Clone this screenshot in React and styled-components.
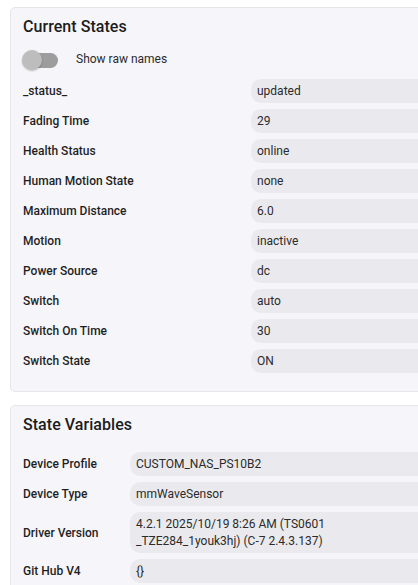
import React from "react";
import styled, { createGlobalStyle } from "styled-components";

const Global = createGlobalStyle`
  html, body { margin: 0; padding: 0; background: #ffffff; overflow: hidden; }
  body { font-family: Roboto, "Noto Sans", "Liberation Sans", sans-serif; color: #1f1f1f; }
`;

const Page = styled.div`
  display: flex;
  flex-direction: column;
  gap: 13px;
  padding: 7px 0 0 10px;
  width: 460px;
`;

const Card = styled.section`
  background: #f6f6fa;
  border: 1px solid #e6e6ea;
  border-radius: 5px;
  padding: 9px 12px ${(p) => p.$padBottom}px 12px;
`;

const Title = styled.h2`
  margin: 0;
  font-size: 16px;
  line-height: 20px;
  font-weight: 500;
  color: #1c1c1c;
  letter-spacing: 0.05px;
`;

const ToggleRow = styled.label`
  display: flex;
  align-items: center;
  gap: 18px;
  height: 22px;
  margin: 12px 0 8px 0;
  font-size: 12px;
  color: #2a2a2a;
`;

const ToggleText = styled.span`
  margin-top: -3px;
`;

const Track = styled.span`
  position: relative;
  display: block;
  width: 35px;
  height: 15px;
  border-radius: 8px;
  background: #9d9d9d;
`;

const Thumb = styled.span`
  position: absolute;
  left: -1px;
  top: -3px;
  width: 20px;
  height: 20px;
  border-radius: 50%;
  background: #bdbdbd;
  box-shadow: 0 1px 2px rgba(0, 0, 0, 0.25);
`;

const Grid = styled.div`
  display: grid;
  grid-template-columns: ${(p) => p.$labelWidth}px 1fr;
  row-gap: 6px;
  margin-top: ${(p) => p.$top}px;
`;

const Label = styled.div`
  display: flex;
  align-items: center;
  font-size: 12px;
  font-weight: 500;
  color: #1f1f1f;
`;

const Value = styled.div`
  background: #eaeaee;
  border-radius: 10px;
  padding: 3.5px 6px;
  font-size: 12px;
  line-height: 17px;
  color: #2b2b2b;
  white-space: pre-line;
`;

const currentStates = [
  ["_status_", "updated"],
  ["Fading Time", "29"],
  ["Health Status", "online"],
  ["Human Motion State", "none"],
  ["Maximum Distance", "6.0"],
  ["Motion", "inactive"],
  ["Power Source", "dc"],
  ["Switch", "auto"],
  ["Switch On Time", "30"],
  ["Switch State", "ON"],
];

const stateVariables = [
  ["Device Profile", "CUSTOM_NAS_PS10B2"],
  ["Device Type", "mmWaveSensor"],
  ["Driver Version", "4.2.1 2025/10/19 8:26 AM (TS0601\n_TZE284_1youk3hj) (C-7 2.4.3.137)"],
  ["Git Hub V4", "{}"],
];

function Rows({ items }) {
  return items.map(([k, v]) => (
    <React.Fragment key={k}>
      <Label>{k}</Label>
      <Value>{v}</Value>
    </React.Fragment>
  ));
}

export default function App() {
  return (
    <>
      <Global />
      <Page>
        <Card $padBottom={18}>
          <Title>Current States</Title>
          <ToggleRow>
            <Track>
              <Thumb />
            </Track>
            <ToggleText>Show raw names</ToggleText>
          </ToggleRow>
          <Grid $labelWidth={228} $top={0}>
            <Rows items={currentStates} />
          </Grid>
        </Card>
        <Card $padBottom={18}>
          <Title>State Variables</Title>
          <Grid $labelWidth={107} $top={17}>
            <Rows items={stateVariables} />
          </Grid>
        </Card>
      </Page>
    </>
  );
}
